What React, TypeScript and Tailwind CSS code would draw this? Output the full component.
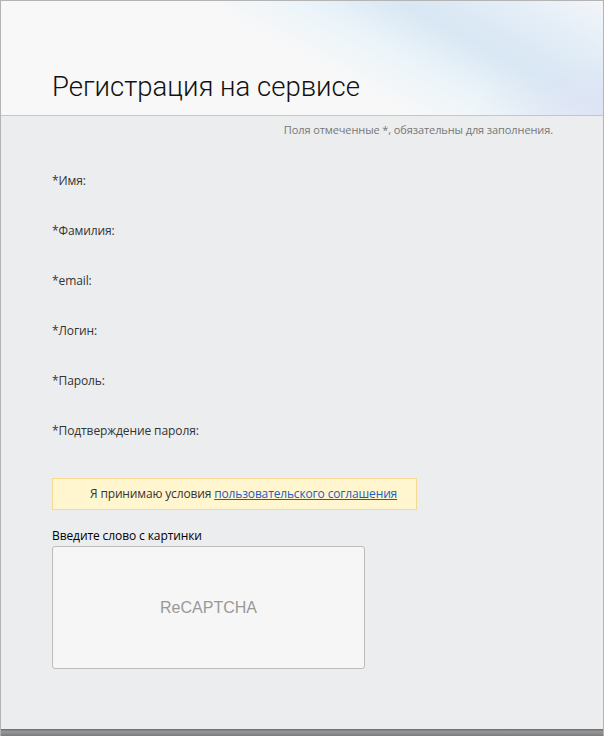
const fields = [
  "*Имя:",
  "*Фамилия:",
  "*email:",
  "*Логин:",
  "*Пароль:",
  "*Подтверждение пароля:",
];

export default function App() {
  return (
    <div className="w-[604px] h-[736px] flex flex-col bg-[#ecedef] border-x border-t border-[#b4b4b4] font-['Open_Sans',sans-serif] overflow-hidden">
      {/* Header */}
      <div className="h-[115px] shrink-0 flex items-end pl-[51px] pb-[13px] border-b border-[#c6c6c6] bg-[#f8f8f8] bg-[radial-gradient(ellipse_130px_60px_at_100%_100%,rgba(224,226,245,0.7),transparent),linear-gradient(28deg,transparent_50%,rgba(228,242,250,0.6)_62%,rgba(190,217,240,0.55)_75%,rgba(205,226,245,0.5)_87%,rgba(238,242,250,0.5)_100%)]">
        <h1 className="font-['Roboto',sans-serif] font-light text-[27.5px] leading-[30px] text-[#111]">
          Регистрация на сервисе
        </h1>
      </div>

      {/* Form */}
      <div className="flex-1 flex flex-col pl-[51px] pr-[50px] pt-[6px]">
        <p className="self-end text-[11px] leading-4 text-[#777] tracking-[-0.1px]">
          Поля отмеченные *, обязательны для заполнения.
        </p>

        <div className="flex flex-col gap-[34px] mt-[35px]">
          {fields.map((f) => (
            <label key={f} className="text-[12px] leading-4 text-[#333] tracking-[-0.1px]">
              {f}
            </label>
          ))}
        </div>

        <div className="mt-[39px] w-[365px] h-[32px] flex items-center pl-[37px] bg-[#fff6cf] border border-[#f6d88f] text-[12px] text-[#333] tracking-[-0.15px]">
          <span>
            Я принимаю условия{" "}
            <a href="#" className="text-[#1c5cc0] underline">
              пользовательского соглашения
            </a>
          </span>
        </div>

        <div className="mt-[18px] text-[12px] leading-4 text-black tracking-[-0.1px]">Введите слово с картинки</div>

        <div className="mt-[2px] w-[313px] h-[123px] flex items-center justify-center bg-[#f6f6f6] border border-[#bcbcbc] rounded-[3px]">
          <span className="font-['Liberation_Sans',sans-serif] text-[16px] text-[#999]">ReCAPTCHA</span>
        </div>
      </div>

      {/* Bottom bar */}
      <div className="h-[7px] shrink-0 bg-[linear-gradient(#6c6c6c,#999_40%,#7a7a7a)]" />
    </div>
  );
}
